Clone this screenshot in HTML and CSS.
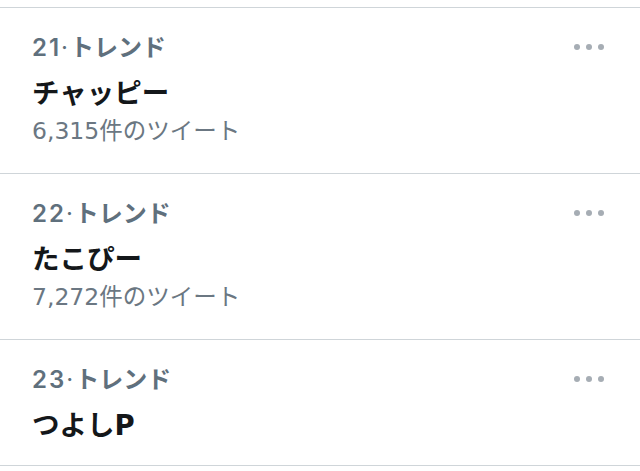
FILE: index.html
```html
<!DOCTYPE html>
<html lang="ja">
<head>
<meta charset="utf-8">
<link rel="stylesheet" href="styles.css">
</head>
<body>
<div class="top-spacer"></div>
<ul class="trends">
  <li class="trend">
    <div class="info">
      <div class="meta"><span class="rank">21</span><span class="sep">·</span>トレンド</div>
      <div class="name">チャッピー</div>
      <div class="count">6,315件のツイート</div>
    </div>
    <div class="more"><span></span><span></span><span></span></div>
  </li>
  <li class="trend">
    <div class="info">
      <div class="meta"><span class="rank">22</span><span class="sep">·</span>トレンド</div>
      <div class="name">たこぴー</div>
      <div class="count">7,272件のツイート</div>
    </div>
    <div class="more"><span></span><span></span><span></span></div>
  </li>
  <li class="trend">
    <div class="info">
      <div class="meta"><span class="rank">23</span><span class="sep">·</span>トレンド</div>
      <div class="name">つよしP</div>
    </div>
    <div class="more"><span></span><span></span><span></span></div>
  </li>
</ul>
</body>
</html>
```
FILE: styles.css
```css
html, body {
  margin: 0;
  padding: 0;
  background: #ffffff;
  font-family: "DejaVu Sans", "Noto Sans CJK JP", sans-serif;
}
.top-spacer {
  height: 7px;
}
.trends {
  list-style: none;
  margin: 0;
  padding: 0;
  border-bottom: 1px solid #cfd5d9;
}
.trend {
  border-top: 1px solid #cfd5d9;
  display: flex;
  justify-content: space-between;
  align-items: flex-start;
  padding: 25px 36px 20px 32px;
}
.info {
  display: flex;
  flex-direction: column;
}
.meta {
  font-family: Inter, "Noto Sans CJK JP", sans-serif;
  font-size: 24px;
  line-height: 30px;
  font-weight: 600;
  color: #5f707d;
}
.rank {
  letter-spacing: 2px;
}
.sep {
  margin: 0 2px 0 0;
  font-weight: 400;
}
.name {
  margin-top: 10px;
  font-size: 27.5px;
  line-height: 40px;
  font-weight: 700;
  color: #14171a;
}
.count {
  margin-top: 3px;
  margin-bottom: 7px;
  font-size: 23.5px;
  line-height: 30px;
  color: #6b7782;
}
.more {
  display: flex;
  gap: 6px;
  padding-top: 11px;
}
.more span {
  width: 6px;
  height: 6px;
  border-radius: 50%;
  background: #a6adb4;
}
```
